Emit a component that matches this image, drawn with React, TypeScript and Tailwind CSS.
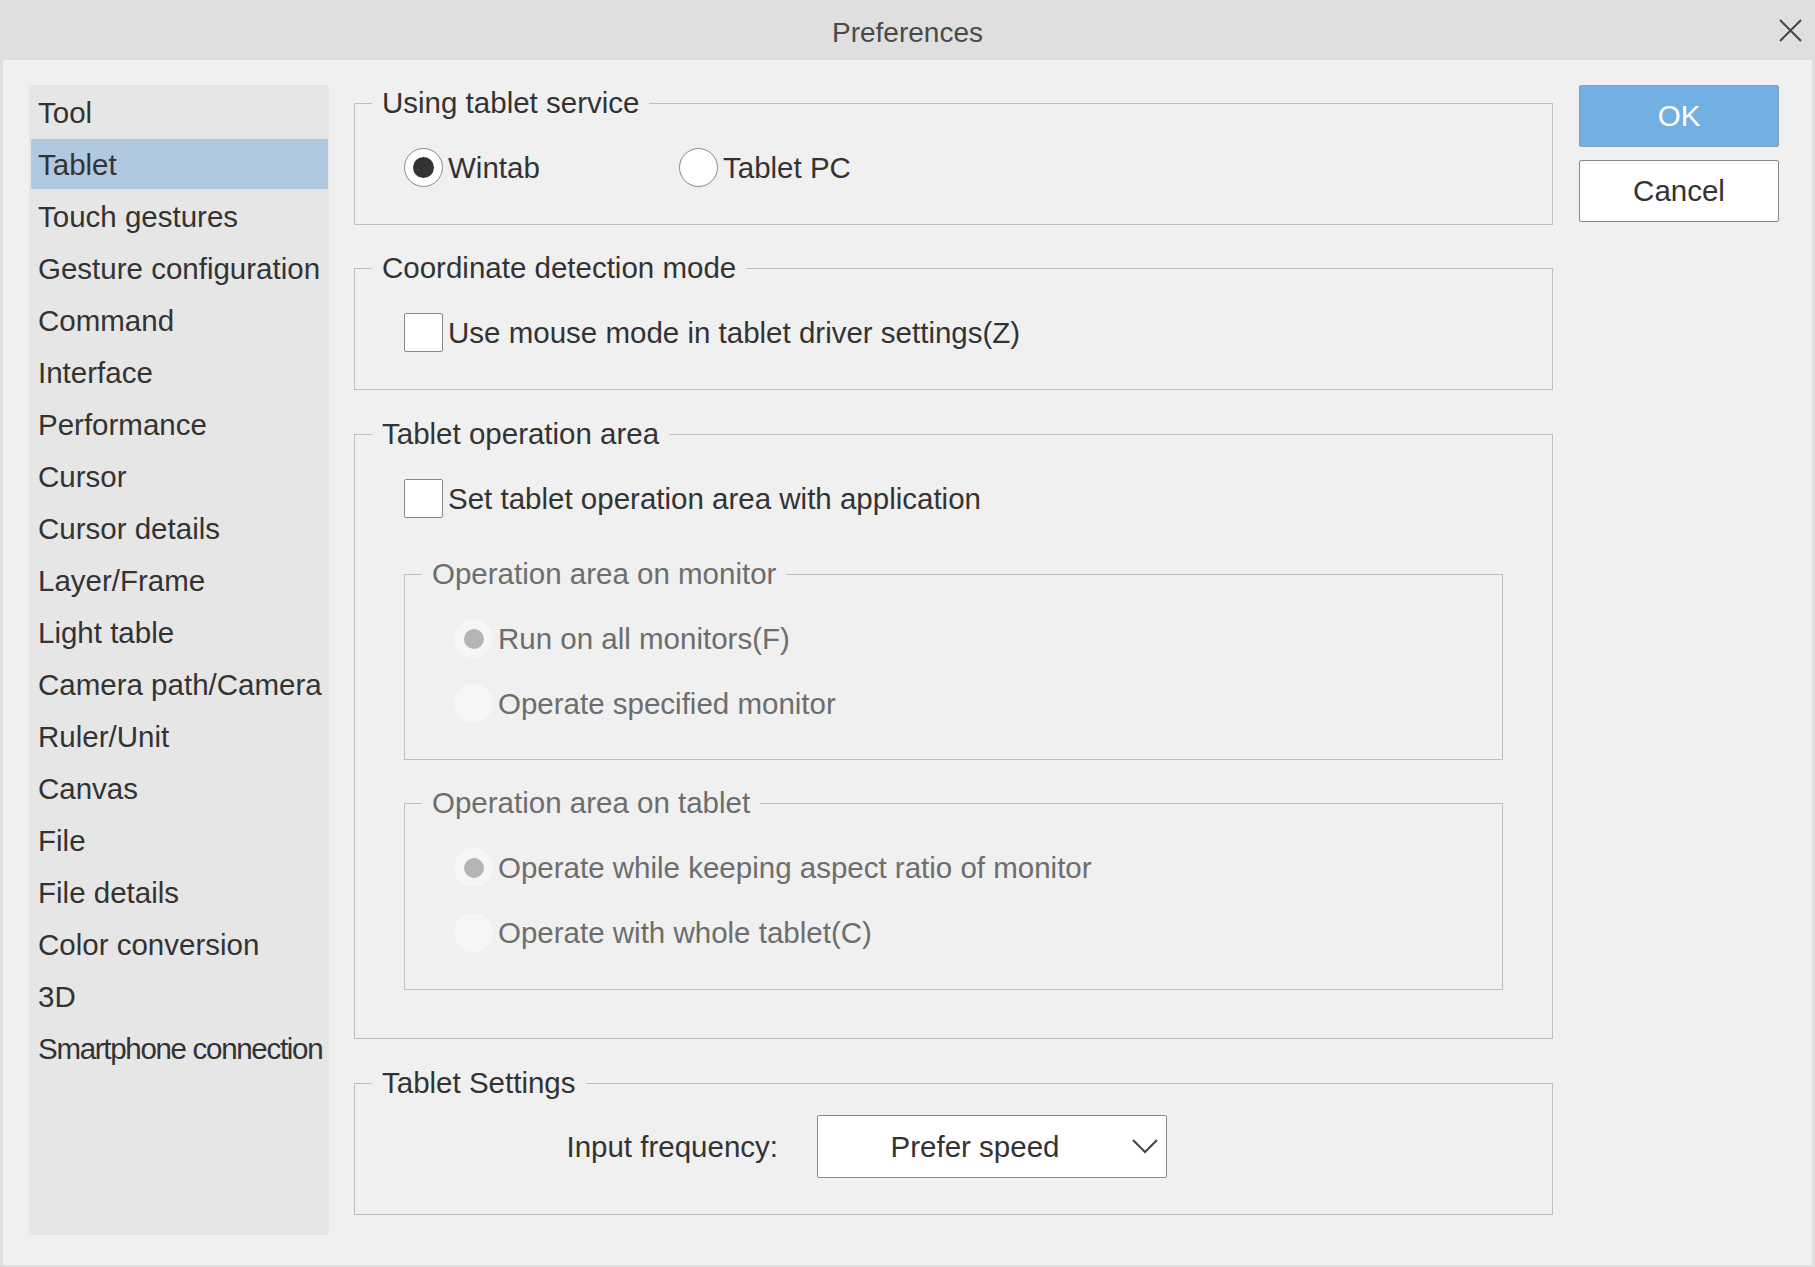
import React from "react";

const items = [
  "Tool",
  "Tablet",
  "Touch gestures",
  "Gesture configuration",
  "Command",
  "Interface",
  "Performance",
  "Cursor",
  "Cursor details",
  "Layer/Frame",
  "Light table",
  "Camera path/Camera",
  "Ruler/Unit",
  "Canvas",
  "File",
  "File details",
  "Color conversion",
  "3D",
  "Smartphone connection",
];

function Radio({ checked, disabled, label }: { checked?: boolean; disabled?: boolean; label: string }) {
  return (
    <div className="flex items-center h-[39px] whitespace-nowrap">
      {disabled ? (
        <div className="w-[39px] h-[39px] rounded-full bg-[#f6f6f6] flex items-center justify-center shrink-0">
          {checked && <div className="w-[20px] h-[20px] rounded-full bg-[#b5b5b5]" />}
        </div>
      ) : (
        <div className="w-[39px] h-[39px] rounded-full bg-white border border-[#8a8a8a] flex items-center justify-center shrink-0">
          {checked && <div className="w-[21px] h-[21px] rounded-full bg-[#333333]" />}
        </div>
      )}
      <span className={disabled ? "ml-[5px] pt-[1px] text-[#6d6d6d]" : "ml-[5px] pt-[1px] text-[#333333]"}>{label}</span>
    </div>
  );
}

function Check({ label }: { label: string }) {
  return (
    <div className="flex items-center h-[39px] whitespace-nowrap">
      <div className="w-[39px] h-[39px] bg-white border border-[#8a8a8a] rounded-[2px] shrink-0" />
      <span className="ml-[5px] pt-[1px] text-[#333333]">{label}</span>
    </div>
  );
}

function Group({
  title,
  disabled,
  className,
  children,
}: {
  title: string;
  disabled?: boolean;
  className?: string;
  children: React.ReactNode;
}) {
  return (
    <fieldset className={"border border-[#bfbfbf] " + (className ?? "")}>
      <legend
        className={
          disabled
            ? "ml-[17px] px-[10px] leading-[36px] text-[#6d6d6d] whitespace-nowrap"
            : "ml-[17px] px-[10px] leading-[36px] text-[#333333] whitespace-nowrap"
        }
      >
        {title}
      </legend>
      {children}
    </fieldset>
  );
}

export default function App() {
  return (
    <div className="w-[1815px] h-[1267px] bg-[#dfdfdf] flex flex-col font-['Liberation_Sans',Arial,sans-serif] text-[29.5px] text-[#333333] overflow-hidden">
      {/* Title bar */}
      <div className="h-[60px] shrink-0 grid grid-cols-[1fr_auto_1fr] items-center">
        <div />
        <div className="text-[28px] text-[#4a4a4a] leading-none mt-[6px]">Preferences</div>
        <div className="flex justify-end pr-[13px]">
          <svg width="23" height="23" viewBox="0 0 23 23" fill="none" stroke="#444444" strokeWidth="2">
            <line x1="1" y1="1" x2="22" y2="22" />
            <line x1="22" y1="1" x2="1" y2="22" />
          </svg>
        </div>
      </div>

      {/* Body */}
      <div className="flex-1 mx-[3px] mb-[2px] bg-[#f0f0f0] flex items-start pt-[25px]">
        {/* Sidebar */}
        <div className="ml-[26px] w-[300px] h-[1150px] bg-[#e6e6e6] pt-[2px] shrink-0">
          {items.map((it) => (
            <div
              key={it}
              className={
                it === "Tablet"
                  ? "h-[50px] mb-[2px] ml-[2px] mr-[1px] pl-[7px] pt-[1px] leading-[50px] bg-[#b1c9e0] whitespace-nowrap"
                  : it === "Smartphone connection"
                  ? "h-[50px] mb-[2px] ml-[2px] mr-[1px] pl-[7px] pt-[1px] leading-[50px] whitespace-nowrap tracking-[-1.3px]"
                  : "h-[50px] mb-[2px] ml-[2px] mr-[1px] pl-[7px] pt-[1px] leading-[50px] whitespace-nowrap"
              }
            >
              {it}
            </div>
          ))}
        </div>

        {/* Main panel */}
        <div className="ml-[25px] w-[1199px] shrink-0 flex flex-col">
          <Group title="Using tablet service">
            <div className="pt-[27px] pb-[37px] pl-[49px] flex">
              <div className="w-[275px]">
                <Radio checked label="Wintab" />
              </div>
              <Radio label="Tablet PC" />
            </div>
          </Group>

          <Group title="Coordinate detection mode" className="mt-[25px]">
            <div className="pt-[27px] pb-[37px] pl-[49px]">
              <Check label="Use mouse mode in tablet driver settings(Z)" />
            </div>
          </Group>

          <Group title="Tablet operation area" className="mt-[26px]">
            <div className="pt-[27px] pb-[48px] pl-[49px] pr-[49px]">
              <Check label="Set tablet operation area with application" />
              <Group title="Operation area on monitor" disabled className="mt-[38px]">
                <div className="pt-[27px] pb-[36px] pl-[49px] flex flex-col gap-[26px]">
                  <Radio disabled checked label="Run on all monitors(F)" />
                  <Radio disabled label="Operate specified monitor" />
                </div>
              </Group>
              <Group title="Operation area on tablet" disabled className="mt-[25px]">
                <div className="pt-[27px] pb-[37px] pl-[49px] flex flex-col gap-[26px]">
                  <Radio disabled checked label="Operate while keeping aspect ratio of monitor" />
                  <Radio disabled label="Operate with whole tablet(C)" />
                </div>
              </Group>
            </div>
          </Group>

          <Group title="Tablet Settings" className="mt-[26px]">
            <div className="pt-[14px] pb-[36px] flex items-center">
              <div className="w-[423px] text-right whitespace-nowrap pt-[1px]">Input frequency:</div>
              <div className="ml-[39px] w-[350px] h-[63px] bg-white border border-[#8a8a8a] rounded-[2px] flex items-center">
                <div className="flex-1 text-center whitespace-nowrap pt-[1px]">Prefer speed</div>
                <svg width="26" height="15" viewBox="0 0 26 15" fill="none" stroke="#444444" strokeWidth="2" className="mr-[8px]">
                  <polyline points="1,1 13,13 25,1" />
                </svg>
              </div>
            </div>
          </Group>
        </div>

        {/* Buttons */}
        <div className="ml-[26px] w-[200px] shrink-0 flex flex-col gap-[13px]">
          <div className="h-[62px] bg-[#72b0e4] border border-[#8b9cab] rounded-[2px] flex items-center justify-center text-white">
            OK
          </div>
          <div className="h-[62px] bg-white border border-[#8a8a8a] rounded-[2px] flex items-center justify-center text-[#333333]">
            Cancel
          </div>
        </div>
      </div>
    </div>
  );
}
